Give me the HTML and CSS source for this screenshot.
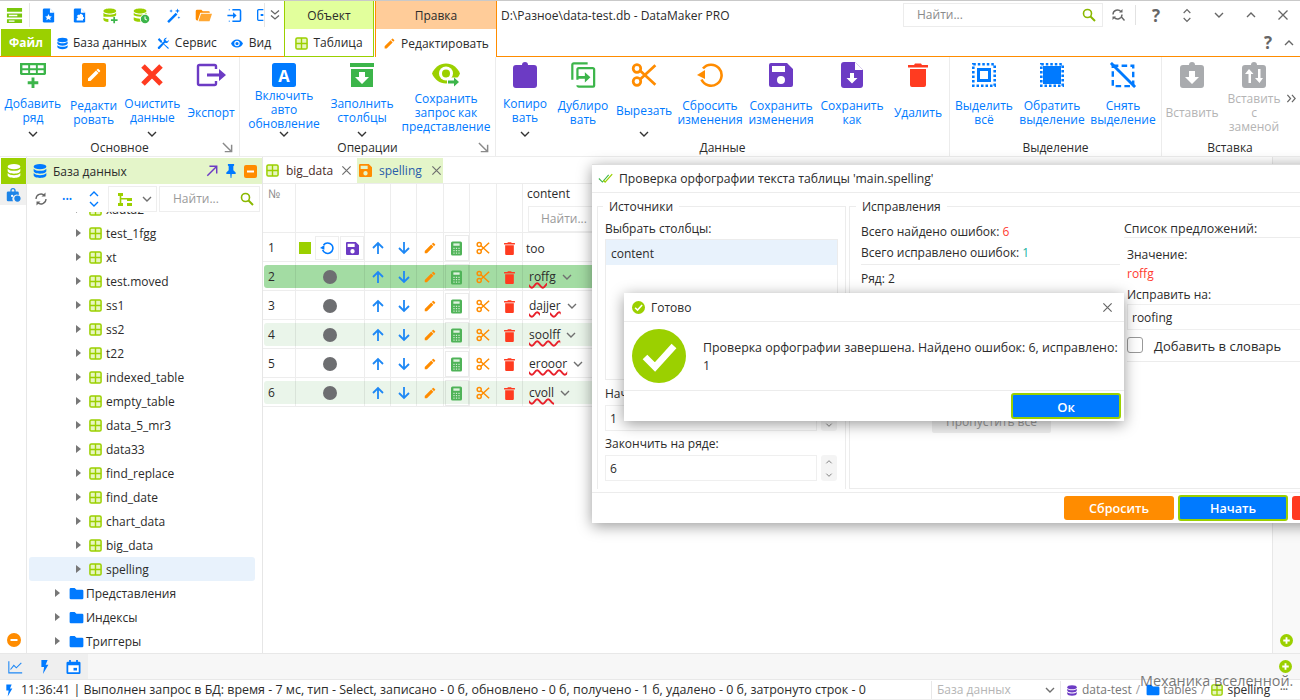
FILE: index.html
```html
<!DOCTYPE html>
<html lang="ru">
<head>
<meta charset="utf-8">
<title>DataMaker PRO</title>
<link rel="stylesheet" href="styles.css">
</head>
<body>
<svg class="sprite" xmlns="http://www.w3.org/2000/svg">
  <symbol id="logo" viewBox="0 0 18 18"><path fill="#7ac70c" d="M1 1h16v4H1zM1 7h16v4H1zM1 13h16v4H1z"/><path fill="#fff" d="M3 8.300h9v1.400H3zM3 14.300h6v1.400H3z"/></symbol>
  <symbol id="docstar" viewBox="0 0 24 24"><path fill="#007aff" d="M6 2h8l6 6v12a2 2 0 0 1-2 2H6a2 2 0 0 1-2-2V4a2 2 0 0 1 2-2z"/><path fill="#fff" d="M14 2l6 6h-6zM12 10l1.500 3 3.200.4-2.400 2.200.7 3.200-3-1.700-3 1.700.7-3.200-2.400-2.200 3.200-.4z"/></symbol>
  <symbol id="docpuzzle" viewBox="0 0 24 24"><path fill="#007aff" d="M6 2h8l6 6v12a2 2 0 0 1-2 2H6a2 2 0 0 1-2-2V4a2 2 0 0 1 2-2z"/><path fill="#fff" d="M14 2l6 6h-6zM10 11h2.500a1.500 1.500 0 1 1 3 0H17v3a1.500 1.500 0 1 1 0 3v2H8v-3a1.500 1.500 0 1 0 0-3z"/></symbol>
  <symbol id="dbplus" viewBox="0 0 24 24"><path fill="#9bd000" d="M11 2c5 0 9 1.300 9 3.500S16 9 11 9 2 7.700 2 5.500 6 2 11 2zM2 8c2 2 6 2.800 9 2.800S18 10 20 8v3.500c-1.500 1.600-4 2.200-6.500 2.400H2.200C2 13.600 2 13 2 12zM2 15c2 1.200 4.500 1.800 7 1.900V21c-4-.2-7-1.600-7-3.500z"/><path fill="#3cb54a" d="M16 14h2.400v3.400H22v2.400h-3.600V23H16v-3.200h-3.400v-2.400H16z"/></symbol>
  <symbol id="dbclock" viewBox="0 0 24 24"><path fill="#9bd000" d="M10 2c5 0 9 1.300 9 3.500S15 9 10 9 1 7.700 1 5.500 5 2 10 2zM1 8c2 2 6 2.800 9 2.800S17 10 19 8v2.200a7.400 7.400 0 0 0-8.500 3.400C7 13.500 3 12.800 1 11.600zM1 14.500c2 1.300 5.500 2 8.700 2 0 1.500.3 3 1 4.400H10c-5 0-9-1.400-9-3.400z"/><circle cx="17" cy="17" r="6" fill="#3cb54a"/><path fill="none" stroke="#fff" stroke-width="1.500" d="M17 13.500V17l2.500 1.500"/></symbol>
  <symbol id="wand" viewBox="0 0 24 24"><path fill="#007aff" d="M16.500 8l2.500 2.500L7 22.500 4.500 20z"/><path fill="#007aff" d="M19 2l1 2.500 2.500 1-2.500 1-1 2.500-1-2.500-2.500-1 2.500-1zM10 3l.7 1.800 1.800.7-1.800.7L10 8l-.7-1.800L7.500 5.500l1.800-.7zM21 13l.6 1.400 1.400.6-1.400.6-.6 1.400-.6-1.400-1.400-.6 1.400-.6z"/></symbol>
  <symbol id="openfolder" viewBox="0 0 24 24"><path fill="#ff8c00" d="M3 4h6l2 2h8a2 2 0 0 1 2 2H7.500L4 19H3a2 2 0 0 1-2-2V6a2 2 0 0 1 2-2z"/><path fill="#ffa733" d="M8.500 9.500H24l-3.500 10.500H5z"/></symbol>
  <symbol id="login" viewBox="0 0 24 24"><path fill="none" stroke="#007aff" stroke-width="2.200" d="M9 4h10a1.500 1.500 0 0 1 1.500 1.500v13A1.500 1.500 0 0 1 19 20H9M4 20h1M4 4h1"/><path fill="#007aff" d="M2 11h8V7.500l5 4.500-5 4.500V13H2z"/></symbol>
  <symbol id="boxclip" viewBox="0 0 10 24"><path fill="none" stroke="#007aff" stroke-width="2" d="M10 4H3a1.500 1.500 0 0 0-1.500 1.500v13A1.500 1.500 0 0 0 3 20h7"/><rect x="6" y="10.500" width="4" height="3" fill="#007aff"/></symbol>
  <symbol id="dchev" viewBox="0 0 12 12"><path fill="none" stroke="#666" stroke-width="1.300" d="M2 1.500l4 3.500 4-3.500M2 6.500l4 3.500 4-3.500"/></symbol>
  <symbol id="drchev" viewBox="0 0 12 12"><path fill="none" stroke="#666" stroke-width="1.300" d="M1.500 2L5 6l-3.500 4M6.500 2L10 6l-3.500 4"/></symbol>
  <symbol id="db" viewBox="0 0 24 24"><ellipse cx="12" cy="5.500" rx="9.500" ry="4" fill="currentColor"/><path fill="currentColor" d="M2.500 8.500c2 2.400 5.500 3.200 9.500 3.200s7.500-.8 9.500-3.200V12c0 2.200-4.300 4-9.500 4s-9.500-1.800-9.500-4zM2.500 15c2 2.400 5.500 3.200 9.500 3.200s7.500-.8 9.500-3.200v3.500c0 2.200-4.300 4-9.500 4s-9.500-1.800-9.500-4z"/></symbol>
  <symbol id="tools" viewBox="0 0 24 24"><path fill="#007aff" d="M4 2l5.500 5.500-.5 1.500L22 20.500 20.500 22 8.500 10l-1.500.5L1.500 5z"/><path fill="#007aff" d="M22 5.500a5.500 5.500 0 0 1-7.200 5.200L5 21.500a2 2 0 0 1-3-3l10.500-10A5.500 5.500 0 0 1 18.500 1.500L15 5l3.500 3.500z"/></symbol>
  <symbol id="eye" viewBox="0 0 24 24"><path fill="currentColor" d="M12 4.500C7 4.500 2.700 7.600 1 12c1.700 4.400 6 7.500 11 7.500s9.300-3.100 11-7.500c-1.700-4.400-6-7.500-11-7.500zM12 17a5 5 0 1 1 0-10 5 5 0 0 1 0 10zm0-8a3 3 0 1 0 0 6 3 3 0 0 0 0-6z"/></symbol>
  <symbol id="table" viewBox="0 0 14 14"><rect x="1" y="1" width="12" height="12" rx="1.500" fill="#e7f6bf" stroke="#9bd000" stroke-width="1.600"/><path stroke="#9bd000" stroke-width="1.500" d="M7 1v12M1 7h12"/></symbol>
  <symbol id="pencil" viewBox="0 0 24 24"><path fill="#ff8c00" d="M3 17.250V21h3.750L17.810 9.940l-3.750-3.750L3 17.250zM20.710 7.040a1 1 0 0 0 0-1.410l-2.340-2.340a1 1 0 0 0-1.410 0l-1.830 1.830 3.750 3.750 1.830-1.830z"/></symbol>
  <symbol id="search" viewBox="0 0 14 14"><circle cx="5.500" cy="5.500" r="4" fill="none" stroke="#8ab800" stroke-width="1.600"/><path stroke="#8ab800" stroke-width="2" d="M8.500 8.500l4.500 4.500"/></symbol>
  <symbol id="rsearch" viewBox="0 0 16 16"><path fill="none" stroke="#666" stroke-width="1.400" d="M3 7.500a4.500 4.500 0 0 1 8-2.800M12 7.500a4.500 4.500 0 0 1-8 2.800M11 9.500l3.500 4"/><path fill="#666" d="M9 5.500h3.500V2zM6 9.500H2.500V13z"/></symbol>
  <symbol id="updown" viewBox="0 0 12 18"><path fill="none" stroke="currentColor" stroke-width="1.400" d="M2 6l4-4 4 4M2 12l4 4 4-4"/></symbol>
  <symbol id="cdown" viewBox="0 0 12 12"><path fill="none" stroke="currentColor" stroke-width="1.400" d="M2 4l4 4 4-4"/></symbol>
  <symbol id="cup" viewBox="0 0 12 12"><path fill="none" stroke="currentColor" stroke-width="1.400" d="M2 8l4-4 4 4"/></symbol>
  <symbol id="x" viewBox="0 0 12 12"><path fill="none" stroke="currentColor" stroke-width="1.300" d="M1.500 1.500l9 9M10.500 1.500l-9 9"/></symbol>

  <symbol id="addrow" viewBox="0 0 27 27"><path fill="#3cb54a" d="M0 1h27v11a1.500 1.500 0 0 1-1.500 1.500h-24A1.500 1.500 0 0 1 0 12z"/><path fill="#fff" d="M2.500 3.500h6v3h-6zM10.500 3.500h6v3h-6zM18.500 3.500h6v3h-6zM2.500 8.500h6v3h-6zM10.500 8.500h6v3h-6zM18.500 8.500h6v3h-6z"/><path fill="#3cb54a" d="M12 16h3v4h4v3h-4v4h-3v-4H8v-3h4z"/></symbol>
  <symbol id="editbox" viewBox="0 0 24 24"><rect width="24" height="24" rx="2" fill="#ff8c00"/><path fill="#fff" d="M6 15.500V18h2.500l8-8-2.500-2.500zM18 8.500a.7.700 0 0 0 0-1L16.500 6a.7.700 0 0 0-1 0l-1 1 2.500 2.500z"/></symbol>
  <symbol id="redx" viewBox="0 0 24 24"><path fill="none" stroke="#ff3b20" stroke-width="5" d="M3 3l18 18M21 3L3 21"/></symbol>
  <symbol id="export" viewBox="0 0 30 24"><path fill="none" stroke="#6c3bc4" stroke-width="2.400" d="M20 6V3.500A1.500 1.500 0 0 0 18.500 2h-15A1.500 1.500 0 0 0 2 3.500v17A1.500 1.500 0 0 0 3.500 22h15a1.500 1.500 0 0 0 1.500-1.500V18"/><path fill="#6c3bc4" d="M11 10.500h12V6l7 6-7 6v-4.500H11z"/></symbol>
  <symbol id="autoa" viewBox="0 0 24 24"><rect width="24" height="24" rx="2.500" fill="#007aff"/><text x="12" y="18.500" text-anchor="middle" font-family="Liberation Mono, monospace" font-weight="700" font-size="19" fill="#fff">A</text></symbol>
  <symbol id="fill" viewBox="0 0 24 24"><path fill="#3cb54a" d="M0 0h24v4H0zM1 6h22v18H1z"/><path fill="#fff" d="M9 9h6v5h4l-7 7-7-7h4z"/></symbol>
  <symbol id="eyearrow" viewBox="0 0 28 23"><path fill="#9bd000" d="M14 0C7.500 0 2.500 4 0 10c2.500 6 7.500 10 14 10s11.500-4 14-10C25.500 4 20.500 0 14 0z"/><circle cx="14" cy="10" r="7" fill="#fff"/><circle cx="14" cy="10" r="4" fill="#9bd000"/><path fill="#fff" d="M15 14h13v9H15z"/><path fill="#3cb54a" d="M16 17h6v-3l5 4.500-5 4.500v-3h-6z"/></symbol>
  <symbol id="clip" viewBox="0 0 24 26"><path fill="#6c3bc4" d="M12 0a3 3 0 0 1 3 3h6a3 3 0 0 1 3 3v17a3 3 0 0 1-3 3H3a3 3 0 0 1-3-3V6a3 3 0 0 1 3-3h6a3 3 0 0 1 3-3z"/></symbol>
  <symbol id="dup" viewBox="0 0 26 28"><path fill="none" stroke="#3cb54a" stroke-width="2.400" d="M18 1.500H3A1.500 1.500 0 0 0 1.500 3v16M7 19v-11A1.500 1.500 0 0 1 8.500 6.500h15A1.500 1.500 0 0 1 25 8v17.500a1 1 0 0 1-1 1H8.500A1.500 1.500 0 0 1 7 25"/><path fill="#3cb54a" d="M7 15h8v-4l6 5.500L15 22v-4H7z"/></symbol>
  <symbol id="cut" viewBox="0 0 24 24"><g fill="none" stroke="#ff8c00" stroke-width="2.500"><circle cx="5.500" cy="6" r="3.500"/><circle cx="5.500" cy="18" r="3.500"/><path d="M8.500 8l14 13M8.500 16l14-13"/></g></symbol>
  <symbol id="reset" viewBox="0 0 26 26"><path fill="none" stroke="#ff8c00" stroke-width="2.600" d="M6 6.500a10.500 10.500 0 1 1-1.500 11"/><path fill="#ff8c00" d="M0 13l8-5v9z"/></symbol>
  <symbol id="save" viewBox="0 0 24 24"><path fill="#6c3bc4" d="M18 0H2a2 2 0 0 0-2 2v20a2 2 0 0 0 2 2h20a2 2 0 0 0 2-2V6zM12 21a4 4 0 1 1 0-8 4 4 0 0 1 0 8zM16 9H3V3h13z"/></symbol>
  <symbol id="saveo" viewBox="0 0 24 24"><path fill="#ff8c00" d="M18 0H2a2 2 0 0 0-2 2v20a2 2 0 0 0 2 2h20a2 2 0 0 0 2-2V6zM12 21a4 4 0 1 1 0-8 4 4 0 0 1 0 8zM16 9H3V3h13z"/></symbol>
  <symbol id="saveas" viewBox="0 0 22 26"><path fill="#6c3bc4" d="M3 0h11l8 8v15a3 3 0 0 1-3 3H3a3 3 0 0 1-3-3V3a3 3 0 0 1 3-3z"/><path fill="#fff" d="M14 0l8 8h-8zM9 11h4v5h3.500L11 21.500 5.500 16H9z"/></symbol>
  <symbol id="trash" viewBox="0 0 20 24"><path fill="#ff3b20" d="M2 6h16v16a2 2 0 0 1-2 2H4a2 2 0 0 1-2-2zM0 2h6l1-1.500h6L14 2h6v2.500H0z"/></symbol>
  <symbol id="selall" viewBox="0 0 24 24"><path fill="none" stroke="#007aff" stroke-width="2.600" stroke-dasharray="2.500 2" d="M1.300 1.300h21.400v21.400H1.300z"/><rect x="6.500" y="6.500" width="11" height="11" fill="#fff" stroke="#007aff" stroke-width="3"/></symbol>
  <symbol id="invert" viewBox="0 0 24 24"><path fill="none" stroke="#007aff" stroke-width="2.600" stroke-dasharray="2.500 2" d="M1.300 1.300h21.400v21.400H1.300z"/><rect x="3" y="3" width="18" height="18" fill="#007aff"/></symbol>
  <symbol id="desel" viewBox="0 0 28 28"><path fill="none" stroke="#007aff" stroke-width="2.600" stroke-dasharray="6 3.500" d="M3 4h22v22H3z"/><path stroke="#007aff" stroke-width="3" d="M1 1l26 26"/></symbol>
  <symbol id="pastedown" viewBox="0 0 24 26"><path fill="#a9abae" d="M12 0a3 3 0 0 1 3 3h6a3 3 0 0 1 3 3v17a3 3 0 0 1-3 3H3a3 3 0 0 1-3-3V6a3 3 0 0 1 3-3h6a3 3 0 0 1 3-3z"/><path fill="#fff" d="M9 9h6v6h4l-7 7-7-7h4z"/></symbol>
  <symbol id="pasteswap" viewBox="0 0 24 26"><path fill="#a9abae" d="M12 0a3 3 0 0 1 3 3h6a3 3 0 0 1 3 3v17a3 3 0 0 1-3 3H3a3 3 0 0 1-3-3V6a3 3 0 0 1 3-3h6a3 3 0 0 1 3-3z"/><path fill="#fff" d="M7 7l4.500 5H9v9H6.500v-9H3zM16 7h2.500v9H21l-3.500 5-4.500-5h3z" /></symbol>
  <symbol id="corner" viewBox="0 0 12 12"><path fill="none" stroke="#8a8a8a" stroke-width="1.600" d="M1 1l9 9M3 10.500h7.500V3"/></symbol>

  <symbol id="lock" viewBox="0 0 18 18"><path fill="#1d84e8" d="M6 4a3 3 0 0 1 6 0v1h2a1.500 1.500 0 0 1 1.500 1.500V9A5 5 0 0 0 9 16H3.500A1.500 1.500 0 0 1 2 14.500v-8A1.500 1.500 0 0 1 3.500 5H6zm1.500 1h3V4a1.500 1.500 0 0 0-3 0z"/><circle cx="14" cy="13" r="3.500" fill="#1d84e8"/><circle cx="8" cy="10" r="1.300" fill="#fff"/></symbol>
  <symbol id="refresh" viewBox="0 0 16 16"><path fill="none" stroke="#666" stroke-width="1.300" d="M3 8a5 5 0 0 1 8.500-3.500M13 8a5 5 0 0 1-8.500 3.500"/><path fill="#666" d="M12.500 1.500v4h-4zM3.500 14.500v-4h4z"/></symbol>
  <symbol id="treeic" viewBox="0 0 16 16"><path fill="#9bd000" d="M1 2h5v3H1zM1 12h5v3H1zM10 7h5v3h-5zM10 12h5v3h-5zM2.700 5h1.600v2H10v1.500H4.300V12H2.700z"/></symbol>
  <symbol id="arrowne" viewBox="0 0 14 14"><path fill="none" stroke="#6c3bc4" stroke-width="1.700" d="M1.500 12.500L12 2M4 1.500h8.500V10"/></symbol>
  <symbol id="pin" viewBox="0 0 14 18"><path fill="#007aff" d="M3 0h8v2l-1 1v5l3 3v2H8l-.5 5h-1L6 13H1v-2l3-3V3L3 2z"/></symbol>
  <symbol id="folder" viewBox="0 0 24 20"><path fill="#007aff" d="M9 1H3a2 2 0 0 0-2 2v14a2 2 0 0 0 2 2h18a2 2 0 0 0 2-2V6a2 2 0 0 0-2-2H12z"/></symbol>
  <symbol id="up" viewBox="0 0 14 14"><path fill="none" stroke="#1e88f5" stroke-width="1.800" d="M7 13V2M2 7l5-5 5 5"/></symbol>
  <symbol id="down" viewBox="0 0 14 14"><path fill="none" stroke="#1e88f5" stroke-width="1.800" d="M7 1v11M2 7l5 5 5-5"/></symbol>
  <symbol id="calc" viewBox="0 0 14 18"><rect width="14" height="18" rx="2" fill="#4fb358"/><path fill="#dff2df" d="M3 2.500h8v3H3z"/><path fill="#cfeccf" d="M3 8h1.600v1.600H3zM6.200 8h1.600v1.600H6.200zM9.400 8H11v1.600H9.400zM3 11h1.600v1.600H3zM6.200 11h1.600v1.600H6.200zM9.400 11H11v1.600H9.400zM3 14h1.600v1.600H3zM6.200 14h1.600v1.600H6.200zM9.400 14H11v1.600H9.400z"/></symbol>
  <symbol id="blueundo" viewBox="0 0 16 16"><path fill="none" stroke="#007aff" stroke-width="1.800" d="M4 4.500a6 6 0 1 1-1 5.500"/><path fill="#007aff" d="M0 8l5-3.500V10z"/></symbol>
  <symbol id="dblcheck" viewBox="0 0 18 12"><path fill="none" stroke="#3cb54a" stroke-width="1.200" d="M1 6l4 4 7-8"/><path fill="none" stroke="#9bd000" stroke-width="1.400" d="M6 8l2 2 8-9"/></symbol>
  <symbol id="chart" viewBox="0 0 18 16"><path fill="none" stroke="#1e88f5" stroke-width="1.300" d="M1 1v14h16M3 11l4-5 3 3 6-6"/></symbol>
  <symbol id="bolt" viewBox="0 0 12 18"><path fill="#007aff" d="M2 0h8L7.500 6H11L4 18l1.500-9H2z"/></symbol>
  <symbol id="cal" viewBox="0 0 16 16"><path fill="#007aff" d="M3 0h2v2h6V0h2v2h1.500A1.500 1.500 0 0 1 16 3.500v11a1.500 1.500 0 0 1-1.500 1.500h-13A1.500 1.500 0 0 1 0 14.500v-11A1.500 1.500 0 0 1 1.500 2H3z"/><path fill="#fff" d="M2 6h12v8H2z"/><path fill="#007aff" d="M8 9h4v3H8z"/></symbol>
  <symbol id="minuscircle" viewBox="0 0 14 14"><circle cx="7" cy="7" r="7" fill="#ff8c00"/><path fill="#fff" d="M3.500 6h7v2h-7z"/></symbol>
  <symbol id="pluscircle" viewBox="0 0 14 14"><circle cx="7" cy="7" r="7" fill="#9bd000"/><path fill="#fff" d="M6 3.500h2V6h2.500v2H8v2.500H6V8H3.500V6H6z"/></symbol>
  <symbol id="minusbox" viewBox="0 0 13 13"><rect width="13" height="13" rx="2" fill="#ff8c00"/><path fill="#fff" d="M3 5.500h7v2H3z"/></symbol>
  <symbol id="okcircle" viewBox="0 0 54 54"><circle cx="27" cy="27" r="27" fill="#9bd000"/><path fill="none" stroke="#fff" stroke-width="6.500" d="M13 28l10 10 19-21"/></symbol>
</svg>

<div class="app">
  <header class="top">
    <div class="top-left">
      <div class="qat">
        <svg class="qi logo"><use href="#logo"/></svg>
        <span class="qsep"></span>
        <svg class="qi q1"><use href="#docstar"/></svg>
        <svg class="qi"><use href="#docpuzzle"/></svg>
        <svg class="qi"><use href="#dbplus"/></svg>
        <svg class="qi"><use href="#dbclock"/></svg>
        <svg class="qi"><use href="#wand"/></svg>
        <svg class="qi"><use href="#openfolder"/></svg>
        <svg class="qi"><use href="#login"/></svg>
        <svg class="qclip"><use href="#boxclip"/></svg>
        <span class="qsep2"></span>
        <svg class="qmore"><use href="#dchev"/></svg>
      </div>
      <nav class="menu">
        <span class="menu-file">Файл</span>
        <span class="menu-item m-db"><svg class="mi blue"><use href="#db"/></svg>База данных</span>
        <span class="menu-item m-srv"><svg class="mi"><use href="#tools"/></svg>Сервис</span>
        <span class="menu-item"><svg class="mi m-eye blue"><use href="#eye"/></svg>Вид</span>
      </nav>
    </div>
    <div class="ctx ctx-object">
      <div class="ctx-head">Объект</div>
      <div class="ctx-tab"><svg class="mi"><use href="#table"/></svg>Таблица</div>
    </div>
    <div class="ctx ctx-edit">
      <div class="ctx-head">Правка</div>
      <div class="ctx-tab"><svg class="mi"><use href="#pencil"/></svg>Редактировать</div>
    </div>
    <div class="title-area">
      <div class="title-row">
        <span class="title-text">D:\Разное\data-test.db - DataMaker PRO</span>
        <div class="top-search"><span>Найти...</span><svg class="s14"><use href="#search"/></svg></div>
        <svg class="s16 tool-r"><use href="#rsearch"/></svg>
        <span class="vsep"></span>
        <span class="help">?</span>
        <svg class="win win-tall gray"><use href="#updown"/></svg>
        <svg class="win gray"><use href="#cdown"/></svg>
        <svg class="win gray"><use href="#cup"/></svg>
        <svg class="win gray"><use href="#x"/></svg>
      </div>
      <div class="title-row2">
        <span class="help">?</span>
        <svg class="s12 gray"><use href="#cup"/></svg>
      </div>
    </div>
  </header>

  <section class="ribbon">
    <div class="rgroup g1">
      <div class="rbtns">
        <div class="rb w66"><div class="rb-ic"><svg class="i26"><use href="#addrow"/></svg></div><div class="rb-lbl">Добавить<br>ряд</div><svg class="rb-chev"><use href="#cdown"/></svg></div>
        <div class="rb w56"><div class="rb-ic"><svg class="i24"><use href="#editbox"/></svg></div><div class="rb-lbl">Редакти<br>ровать</div></div>
        <div class="rb w62"><div class="rb-ic"><svg class="i24"><use href="#redx"/></svg></div><div class="rb-lbl">Очистить<br>данные</div><svg class="rb-chev"><use href="#cdown"/></svg></div>
        <div class="rb w56"><div class="rb-ic"><svg class="i30"><use href="#export"/></svg></div><div class="rb-lbl">Экспорт</div></div>
      </div>
      <div class="rcap">Основное<svg class="corner"><use href="#corner"/></svg></div>
    </div>
    <div class="rgroup g2">
      <div class="rbtns pad4">
        <div class="rb w80"><div class="rb-ic"><svg class="i24"><use href="#autoa"/></svg></div><div class="rb-lbl three">Включить<br>авто<br>обновление</div><svg class="rb-chev"><use href="#cdown"/></svg></div>
        <div class="rb w76"><div class="rb-ic"><svg class="i24"><use href="#fill"/></svg></div><div class="rb-lbl">Заполнить<br>столбцы</div><svg class="rb-chev"><use href="#cdown"/></svg></div>
        <div class="rb w92"><div class="rb-ic"><svg class="i28"><use href="#eyearrow"/></svg></div><div class="rb-lbl">Сохранить<br>запрос как<br>представление</div></div>
      </div>
      <div class="rcap">Операции<svg class="corner"><use href="#corner"/></svg></div>
    </div>
    <div class="rgroup g3">
      <div class="rbtns pad2">
        <div class="rb w54"><div class="rb-ic"><svg class="i26"><use href="#clip"/></svg></div><div class="rb-lbl">Копиро<br>вать</div><svg class="rb-chev"><use href="#cdown"/></svg></div>
        <div class="rb w62"><div class="rb-ic"><svg class="i26"><use href="#dup"/></svg></div><div class="rb-lbl">Дублиро<br>вать</div></div>
        <div class="rb w60"><div class="rb-ic"><svg class="i26"><use href="#cut"/></svg></div><div class="rb-lbl">Вырезать</div><svg class="rb-chev"><use href="#cdown"/></svg></div>
        <div class="rb w72"><div class="rb-ic"><svg class="i26"><use href="#reset"/></svg></div><div class="rb-lbl">Сбросить<br>изменения</div></div>
        <div class="rb w70"><div class="rb-ic"><svg class="i24"><use href="#save"/></svg></div><div class="rb-lbl">Сохранить<br>изменения</div></div>
        <div class="rb w72"><div class="rb-ic"><svg class="i26"><use href="#saveas"/></svg></div><div class="rb-lbl">Сохранить<br>как</div></div>
        <div class="rb w60"><div class="rb-ic"><svg class="i24"><use href="#trash"/></svg></div><div class="rb-lbl">Удалить</div></div>
      </div>
      <div class="rcap">Данные</div>
    </div>
    <div class="rgroup g4">
      <div class="rbtns">
        <div class="rb w68"><div class="rb-ic"><svg class="i24"><use href="#selall"/></svg></div><div class="rb-lbl">Выделить<br>всё</div></div>
        <div class="rb w68"><div class="rb-ic"><svg class="i24"><use href="#invert"/></svg></div><div class="rb-lbl">Обратить<br>выделение</div></div>
        <div class="rb w74"><div class="rb-ic"><svg class="i28"><use href="#desel"/></svg></div><div class="rb-lbl">Снять<br>выделение</div></div>
      </div>
      <div class="rcap">Выделение</div>
    </div>
    <div class="rgroup g5">
      <div class="rbtns">
        <div class="rb w60 off"><div class="rb-ic"><svg class="i26"><use href="#pastedown"/></svg></div><div class="rb-lbl">Вставить</div></div>
        <div class="rb w64 off"><div class="rb-ic"><svg class="i26"><use href="#pasteswap"/></svg></div><div class="rb-lbl">Вставить<br>с<br>заменой</div></div>
        <svg class="rmore"><use href="#drchev"/></svg>
      </div>
      <div class="rcap short">Вставка</div>
    </div>
  </section>

  <main class="main">
    <aside class="rail">
      <div class="rail-active"><svg class="i16 white"><use href="#db"/></svg></div>
      <div class="rail-item"><svg class="i16"><use href="#lock"/></svg></div>
      <svg class="rail-min"><use href="#minuscircle"/></svg>
    </aside>
    <aside class="side">
      <div class="side-head">
        <svg class="i16 blue"><use href="#db"/></svg>
        <span class="side-title">База данных</span>
        <svg class="s12 arrow"><use href="#arrowne"/></svg>
        <svg class="s14 pin"><use href="#pin"/></svg>
        <svg class="s13"><use href="#minusbox"/></svg>
      </div>
      <div class="side-tools">
        <svg class="s16 t1"><use href="#refresh"/></svg>
        <span class="dots">•••</span>
        <svg class="ud blue"><use href="#updown"/></svg>
        <div class="tbox tbox-tree"><svg class="s16"><use href="#treeic"/></svg><svg class="s12 gray2"><use href="#cdown"/></svg></div>
        <div class="tbox tbox-find"><span>Найти...</span><svg class="s14"><use href="#search"/></svg></div>
      </div>
      <div class="tree">
        <div class="tree-clip">
          <div class="tr"><i class="ar"></i><svg class="ti"><use href="#table"/></svg>xadta2</div>
          <div class="tr"><i class="ar"></i><svg class="ti"><use href="#table"/></svg>test_1fgg</div>
          <div class="tr"><i class="ar"></i><svg class="ti"><use href="#table"/></svg>xt</div>
          <div class="tr"><i class="ar"></i><svg class="ti"><use href="#table"/></svg>test.moved</div>
          <div class="tr"><i class="ar"></i><svg class="ti"><use href="#table"/></svg>ss1</div>
          <div class="tr"><i class="ar"></i><svg class="ti"><use href="#table"/></svg>ss2</div>
          <div class="tr"><i class="ar"></i><svg class="ti"><use href="#table"/></svg>t22</div>
          <div class="tr"><i class="ar"></i><svg class="ti"><use href="#table"/></svg>indexed_table</div>
          <div class="tr"><i class="ar"></i><svg class="ti"><use href="#table"/></svg>empty_table</div>
          <div class="tr"><i class="ar"></i><svg class="ti"><use href="#table"/></svg>data_5_mr3</div>
          <div class="tr"><i class="ar"></i><svg class="ti"><use href="#table"/></svg>data33</div>
          <div class="tr"><i class="ar"></i><svg class="ti"><use href="#table"/></svg>find_replace</div>
          <div class="tr"><i class="ar"></i><svg class="ti"><use href="#table"/></svg>find_date</div>
          <div class="tr"><i class="ar"></i><svg class="ti"><use href="#table"/></svg>chart_data</div>
          <div class="tr"><i class="ar"></i><svg class="ti"><use href="#table"/></svg>big_data</div>
          <div class="tr sel"><i class="ar"></i><svg class="ti"><use href="#table"/></svg>spelling</div>
          <div class="tr lvl"><i class="ar"></i><svg class="fi"><use href="#folder"/></svg>Представления</div>
          <div class="tr lvl"><i class="ar"></i><svg class="fi"><use href="#folder"/></svg>Индексы</div>
          <div class="tr lvl"><i class="ar"></i><svg class="fi"><use href="#folder"/></svg>Триггеры</div>
        </div>
      </div>
    </aside>
    <section class="work">
      <div class="tabs">
        <div class="tab tab-a"><svg class="s13"><use href="#table"/></svg><span class="tab-name dark">big_data</span><svg class="s11 gray2"><use href="#x"/></svg></div>
        <div class="tab tab-b"><svg class="s13"><use href="#saveo"/></svg><span class="tab-name bluish">spelling</span><svg class="s11 gray2"><use href="#x"/></svg></div>
      </div>
      <div class="grid">
        <div class="row head">
          <div class="c gray-t">№</div><div class="c"></div><div class="c"></div><div class="c"></div><div class="c"></div><div class="c"></div><div class="c"></div><div class="c"></div>
          <div class="c last"><div>content</div><div class="find"><span>Найти...</span></div></div>
        </div>
        <div class="row">
          <div class="c num">1</div>
          <div class="c tools1"><span class="sq"></span><span class="mini"><svg class="s14"><use href="#blueundo"/></svg></span><span class="mini"><svg class="s13"><use href="#save"/></svg></span></div>
          <div class="c ic"><svg class="s14"><use href="#up"/></svg></div><div class="c ic"><svg class="s14"><use href="#down"/></svg></div><div class="c ic"><svg class="s14"><use href="#pencil"/></svg></div>
          <div class="c ic"><span class="calc"><svg class="calc-i"><use href="#calc"/></svg></span></div><div class="c ic"><svg class="s14"><use href="#cut"/></svg></div><div class="c ic"><svg class="tr-i"><use href="#trash"/></svg></div>
          <div class="c last plain">too</div>
        </div>
        <div class="row hl-strong">
          <div class="c num">2</div><div class="c ic"><i class="dot"></i></div>
          <div class="c ic"><svg class="s14"><use href="#up"/></svg></div><div class="c ic"><svg class="s14"><use href="#down"/></svg></div><div class="c ic"><svg class="s14"><use href="#pencil"/></svg></div>
          <div class="c ic"><span class="calc"><svg class="calc-i"><use href="#calc"/></svg></span></div><div class="c ic"><svg class="s14"><use href="#cut"/></svg></div><div class="c ic"><svg class="tr-i"><use href="#trash"/></svg></div>
          <div class="c last err"><span class="wavy">roffg</span><svg class="s12 gray2"><use href="#cdown"/></svg></div>
        </div>
        <div class="row">
          <div class="c num">3</div><div class="c ic"><i class="dot"></i></div>
          <div class="c ic"><svg class="s14"><use href="#up"/></svg></div><div class="c ic"><svg class="s14"><use href="#down"/></svg></div><div class="c ic"><svg class="s14"><use href="#pencil"/></svg></div>
          <div class="c ic"><span class="calc"><svg class="calc-i"><use href="#calc"/></svg></span></div><div class="c ic"><svg class="s14"><use href="#cut"/></svg></div><div class="c ic"><svg class="tr-i"><use href="#trash"/></svg></div>
          <div class="c last err"><span class="wavy">dajjer</span><svg class="s12 gray2"><use href="#cdown"/></svg></div>
        </div>
        <div class="row hl">
          <div class="c num">4</div><div class="c ic"><i class="dot"></i></div>
          <div class="c ic"><svg class="s14"><use href="#up"/></svg></div><div class="c ic"><svg class="s14"><use href="#down"/></svg></div><div class="c ic"><svg class="s14"><use href="#pencil"/></svg></div>
          <div class="c ic"><span class="calc"><svg class="calc-i"><use href="#calc"/></svg></span></div><div class="c ic"><svg class="s14"><use href="#cut"/></svg></div><div class="c ic"><svg class="tr-i"><use href="#trash"/></svg></div>
          <div class="c last err"><span class="wavy">soolff</span><svg class="s12 gray2"><use href="#cdown"/></svg></div>
        </div>
        <div class="row">
          <div class="c num">5</div><div class="c ic"><i class="dot"></i></div>
          <div class="c ic"><svg class="s14"><use href="#up"/></svg></div><div class="c ic"><svg class="s14"><use href="#down"/></svg></div><div class="c ic"><svg class="s14"><use href="#pencil"/></svg></div>
          <div class="c ic"><span class="calc"><svg class="calc-i"><use href="#calc"/></svg></span></div><div class="c ic"><svg class="s14"><use href="#cut"/></svg></div><div class="c ic"><svg class="tr-i"><use href="#trash"/></svg></div>
          <div class="c last err"><span class="wavy">erooor</span><svg class="s12 gray2"><use href="#cdown"/></svg></div>
        </div>
        <div class="row hl">
          <div class="c num">6</div><div class="c ic"><i class="dot"></i></div>
          <div class="c ic"><svg class="s14"><use href="#up"/></svg></div><div class="c ic"><svg class="s14"><use href="#down"/></svg></div><div class="c ic"><svg class="s14"><use href="#pencil"/></svg></div>
          <div class="c ic"><span class="calc"><svg class="calc-i"><use href="#calc"/></svg></span></div><div class="c ic"><svg class="s14"><use href="#cut"/></svg></div><div class="c ic"><svg class="tr-i"><use href="#trash"/></svg></div>
          <div class="c last err"><span class="wavy">cvoll</span><svg class="s12 gray2"><use href="#cdown"/></svg></div>
        </div>
      </div>
    </section>
    <aside class="rail-r"><svg class="rail-plus"><use href="#pluscircle"/></svg></aside>
  </main>

  <div class="strip">
    <div class="strip-tabs">
      <svg class="sti"><use href="#chart"/></svg>
      <svg class="sti"><use href="#bolt"/></svg>
      <svg class="sti"><use href="#cal"/></svg>
    </div>
    <svg class="rail-plus"><use href="#pluscircle"/></svg>
  </div>

  <footer class="status">
    <svg class="st-bolt"><use href="#bolt"/></svg>
    <span class="st-msg">11:36:41 | Выполнен запрос в БД: время - 7 мс, тип - Select, записано - 0 б, обновлено - 0 б, получено - 1 б, удалено - 0 б, затронуто строк - 0</span>
    <div class="st-db"><span>База данных</span><svg class="s12 gray2"><use href="#cdown"/></svg></div>
    <div class="crumbs">
      <svg class="cr-db"><use href="#db"/></svg><span class="cr-g">data-test</span><span class="cr-s">/</span>
      <svg class="cr-f"><use href="#folder"/></svg><span class="cr-g">tables</span><span class="cr-s">/</span>
      <svg class="cr-t"><use href="#table"/></svg><span>spelling</span>
    </div>
    <span class="st-dots">•••</span>
  </footer>
</div>

<div class="dialog d-spell">
  <div class="d-title"><svg class="dbl"><use href="#dblcheck"/></svg>Проверка орфографии текста таблицы 'main.spelling'</div>
  <div class="d-body">
    <fieldset class="fs fs-src">
      <legend>Источники</legend>
      <div class="lb l1">Выбрать столбцы:</div>
      <div class="list"><div class="list-sel">content</div></div>
      <div class="lb l2">Начать с ряда:</div>
      <div class="spin-row"><div class="inp">1</div><div class="spin"><svg class="s8"><use href="#cup"/></svg><svg class="s8"><use href="#cdown"/></svg></div></div>
      <div class="lb l3">Закончить на ряде:</div>
      <div class="spin-row"><div class="inp">6</div><div class="spin"><svg class="s8"><use href="#cup"/></svg><svg class="s8"><use href="#cdown"/></svg></div></div>
    </fieldset>
    <fieldset class="fs fs-fix">
      <legend>Исправления</legend>
      <div class="fix">
        <div class="fix-l">
          <div class="fl1">Всего найдено ошибок: <b class="red">6</b></div>
          <div class="fl2">Всего исправлено ошибок: <b class="teal">1</b></div>
          <div class="fhr"></div>
          <div class="fl3">Ряд: 2</div>
          <div class="skip">Пропустить все</div>
        </div>
        <div class="fix-r">
          <div class="sg-head">Список предложений:</div>
          <div class="sg-in">
            <div class="sg1">Значение:</div>
            <div class="sg2 red">roffg</div>
            <div class="sg3">Исправить на:</div>
            <div class="sg-inp">roofing</div>
            <label class="sg-ch"><i class="check"></i><span>Добавить в словарь</span></label>
            <div class="sg-hr"></div>
          </div>
        </div>
      </div>
    </fieldset>
  </div>
  <div class="d-foot">
    <button class="btn b-orange">Сбросить</button>
    <button class="btn b-blue">Начать</button>
    <button class="btn b-red">Закрыть</button>
  </div>
</div>

<div class="dialog d-done">
  <div class="dn-title"><svg class="s13"><use href="#okcircle"/></svg><span>Готово</span><svg class="s11 dn-x"><use href="#x"/></svg></div>
  <div class="dn-body"><svg class="dn-ic"><use href="#okcircle"/></svg><p>Проверка орфографии завершена. Найдено ошибок: 6, исправлено:<br>1</p></div>
  <div class="dn-foot"><button class="btn b-blue ok">Ок</button></div>
</div>

<div class="watermark">Механика вселенной.</div>
</body>
</html>
```

FILE: styles.css
```css
* { box-sizing: border-box; }
html, body { margin: 0; height: 100%; }
body {
  width: 1300px; height: 700px; overflow: hidden; position: relative;
  font: 12px/14px "Open Sans", "Noto Sans", sans-serif; color: #2b2b2b; background: #fff;
}
.sprite { position: absolute; width: 0; height: 0; }
svg { display: block; flex: none; }
.blue { color: #007aff; }
.white { color: #fff; }
.gray { color: #666; }
.gray2 { color: #6f6f6f; }
.red { color: #ff3b30; font-weight: 400; }
.teal { color: #20b2a0; font-weight: 400; }

.app { display: flex; flex-direction: column; height: 700px; }

/* header */
.top { display: flex; height: 57px; border-top: 1px solid #c9c9c9; flex: none; }
.top-left { width: 284px; display: flex; flex-direction: column; }
.qat { height: 28px; display: flex; align-items: center; padding-left: 6px; }
.qi { width: 17px; height: 17px; margin-right: 14px; }
.qi.logo { width: 17px; height: 17px; margin-right: 6px; }
.qsep { width: 1px; height: 24px; background: #e6e6e6; margin-right: 10px; }
.qclip { width: 8px; height: 16px; margin-left: -1px; }
.qsep2 { width: 1px; height: 24px; background: #e6e6e6; margin-right: 4px; }
.qmore { width: 12px; height: 12px; }
.menu { height: 28px; display: flex; align-items: center; border-bottom: 1px solid #ff8c00; padding-left: 1px; white-space: nowrap; }
.menu-file { width: 50px; height: 27px; background: #9bd000; color: #fff; font-weight: 700; display: flex; align-items: center; justify-content: center; padding-top: 1px; }
.menu-item { display: flex; align-items: center; gap: 5px; padding-top: 1px; }
.m-db { margin-left: 5px; margin-right: 10px; gap: 4px; }
.m-srv { margin-right: 13px; }
.mi { width: 13px; height: 13px; }
.m-eye { width: 14px; }
.ctx { display: flex; flex-direction: column; text-align: center; }
.ctx-head { height: 28px; display: flex; align-items: center; justify-content: center; padding-top: 1px; }
.ctx-tab { height: 28px; display: flex; align-items: center; justify-content: center; gap: 5px; padding-top: 1px; }
.ctx-object { width: 90px; border: 1px solid #9bd000; border-width: 0 1px; margin-right: 1px; }
.ctx-object .ctx-head { background: #e2ff9c; }
.ctx-object .ctx-tab { border-bottom: 1px solid #9bd000; }
.ctx-edit { width: 122px; border: 1px solid #ff8c00; border-width: 0 1px; }
.ctx-edit .ctx-head { background: #ffcc99; }
.title-area { flex: 1; display: flex; flex-direction: column; border-bottom: 1px solid #ff8c00; }
.title-row { height: 28px; display: flex; align-items: center; padding-left: 4px; }
.title-text { width: 402px; padding-top: 1px; }
.top-search { width: 200px; height: 24px; border: 1px solid #ececec; display: flex; align-items: center; justify-content: space-between; padding: 0 6px 0 13px; color: #8a8a8a; }
.tool-r { margin-left: 7px; }
.vsep { width: 1px; height: 20px; background: #e2e2e2; margin: 0 11px 0 9px; }
.help { font: 700 17px/17px "Open Sans", sans-serif; color: #666; width: 14px; text-align: center; }
.title-row .help { margin-left: 2px; }
.win { width: 12px; height: 12px; margin-left: 20px; }
.win-tall { width: 10px; height: 15px; margin-left: 19px; margin-right: 1px; }
.title-row2 { flex: 1; display: flex; align-items: center; justify-content: flex-end; padding-right: 5px; gap: 8px; }
.s8 { width: 8px; height: 8px; color: #777; }
.s11 { width: 11px; height: 11px; }
.s12 { width: 12px; height: 12px; }
.s13 { width: 13px; height: 13px; }
.s14 { width: 14px; height: 14px; }
.s16 { width: 16px; height: 16px; }
.i16 { width: 16px; height: 16px; }
.i24 { width: 24px; height: 24px; }
.i26 { width: 26px; height: 26px; }
.i28 { width: 28px; height: 26px; }
.i30 { width: 30px; height: 24px; }

/* ribbon */
.ribbon { display: flex; height: 100px; flex: none; border-bottom: 1px solid #ededed; }
.rgroup { display: flex; flex-direction: column; border-right: 1px solid #ececec; }
.g1 { width: 240px; } .g2 { width: 256px; } .g3 { width: 454px; } .g4 { width: 212px; } .g5 { flex: 1; border-right: 0; }
.rbtns { display: flex; height: 83px; }
.pad4 { padding-left: 4px; } .pad2 { padding-left: 2px; }
.rb { display: flex; flex-direction: column; align-items: center; padding-top: 3px; text-align: center; color: #007aff; }
.rb.off { color: #b4b4b4; }
.w54 { width: 54px; } .w56 { width: 56px; } .w60 { width: 60px; } .w62 { width: 62px; } .w64 { width: 64px; } .w66 { width: 66px; }
.w68 { width: 68px; } .w70 { width: 70px; } .w72 { width: 72px; } .w74 { width: 74px; } .w76 { width: 76px; } .w80 { width: 80px; } .w92 { width: 92px; }
.rb-ic { height: 30px; display: flex; align-items: center; justify-content: center; }
.rb-lbl { height: 38px; margin-top: 2px; display: flex; align-items: center; justify-content: center; white-space: nowrap; }
.rb-lbl:last-child { margin-top: 4px; }
.rb-lbl.three { margin-top: 1px; }
.rb-chev { width: 12px; height: 12px; color: #333; margin-top: -2px; }
.rb-lbl.three + .rb-chev { margin-top: -1px; }
.rmore { width: 11px; height: 11px; margin-top: 36px; }
.rcap { height: 16px; line-height: 14px; padding-top: 1px; text-align: center; position: relative; }
.rcap.short { width: 136px; }
.corner { position: absolute; right: 6px; top: 2px; width: 11px; height: 11px; }

/* main */
.main { flex: 1; display: flex; min-height: 0; }
.rail { width: 27px; border-right: 1px solid #e8e8e8; display: flex; flex-direction: column; align-items: stretch; }
.rail-active { height: 26px; margin-top: 1px; margin-left: 1px; background: #9bd000; display: flex; align-items: center; justify-content: center; }
.rail-item { height: 21px; background: #f0f0f0; display: flex; align-items: center; justify-content: center; }
.rail-min { width: 14px; height: 14px; margin: auto 0 6px 7px; }
.side { width: 236px; border-right: 1px solid #e6e6e6; display: flex; flex-direction: column; min-height: 0; }
.side-head { height: 26px; margin-top: 1px; background: #e4f5c9; display: flex; align-items: center; padding-left: 5px; }
.side-title { margin-left: 5px; width: 153px; padding-top: 2px; }
.arrow { margin-right: 6px; }
.pin { margin-right: 6px; }
.side-tools { height: 28px; display: flex; align-items: center; padding: 1px 0 0 6px; }
.dots { color: #007aff; font-size: 9px; width: 16px; margin-left: 13px; }
.ud { width: 12px; height: 18px; margin-left: 10px; margin-right: 8px; }
.tbox { height: 26px; border: 1px solid #eee; display: flex; align-items: center; }
.tbox-tree { width: 49px; padding-left: 8px; gap: 8px; }
.tbox-find { width: 101px; margin-left: 2px; padding: 0 5px 0 13px; justify-content: space-between; color: #9a9a9a; }
.tree { flex: 1; overflow: hidden; min-height: 0; }
.tree-clip { margin-top: -15px; }
.tr { height: 24px; display: flex; align-items: center; padding: 2px 0 0 47px; margin: 0 7px 0 2px; }
.tr.sel { background: #e8f2fc; border-radius: 3px; }
.ar { width: 0; height: 0; border: 4px solid transparent; border-left: 5px solid #777; border-right: 0; margin: 0 8px 2px 0; }
.ti { width: 13px; height: 13px; margin: 0 4px 2px 0; }
.tr.lvl { padding-left: 26px; }
.tr.lvl .ar { margin-right: 9px; }
.fi { width: 15px; height: 13px; margin: 0 2px 2px 0; }

.work { flex: 1; min-width: 0; display: flex; flex-direction: column; }
.tabs { height: 27px; display: flex; border-bottom: 1px solid #ececec; padding-top: 1px; }
.tab { display: flex; align-items: center; }
.tab-a { width: 94px; padding-left: 3px; }
.tab-b { width: 86px; background: #e4f5c9; padding-left: 2px; }
.tab-name { margin: 0 6px 0 7px; width: 49px; padding-top: 1px; }
.tab-b .tab-name { width: 46px; }
.dark { color: #4a2c2a; }
.bluish { color: #2a5caa; }
.grid { display: flex; flex-direction: column; width: 100%; }
.row { display: grid; grid-template-columns: 33px 69px 26px 26px 27px 26px 27px 26px 1fr; height: 29px; border-bottom: 1px solid #ededed; position: relative; isolation: isolate; }
.row.head { height: 49px; }
.row.hl::before, .row.hl-strong::before { content: ""; position: absolute; left: 1px; right: 0; top: 3px; bottom: 2px; border-radius: 3px; z-index: -1; }
.row.hl::before { background: #eaf5ea; }
.row.hl-strong::before { background: #a3dca3; }
.c { border-right: 1px solid rgba(0, 0, 0, .07); display: flex; align-items: center; padding-top: 2px; }
.head .c { align-items: flex-start; padding-top: 3px; }
.gray-t { color: #8a8a8a; padding-left: 5px; }
.num { padding-left: 5px; }
.ic { justify-content: center; }
.dot { width: 14px; height: 14px; border-radius: 50%; background: #6d6e71; }
.calc { width: 24px; height: 26px; border: 1px solid rgba(0, 0, 0, .08); display: flex; align-items: center; justify-content: center; }
.calc-i { width: 11px; height: 15px; }
.tr-i { width: 11px; height: 13px; }
.tools1 { gap: 1px; padding-left: 3px; }
.sq { width: 12px; height: 12px; background: #9bd000; margin-right: 3px; }
.mini { width: 24px; height: 24px; border: 1px solid #eee; display: flex; align-items: center; justify-content: center; }
.last { border-right: 0; }
.plain { padding-left: 3px; padding-top: 3px; }
.err { padding-left: 6px; gap: 5px; }
.wavy { text-decoration: underline wavy #e8202a 1.500px; text-underline-offset: 1px; }
.head .last { flex-direction: column; padding-left: 4px; align-items: stretch; }
.find { height: 26px; margin-top: 5px; margin-left: 1px; border: 1px solid #eee; padding: 5px 0 0 12px; color: #9a9a9a; }
.rail-r { width: 28px; border-left: 1px solid #e8e8e8; background: #f9f9f9; display: flex; flex-direction: column; align-items: center; justify-content: flex-end; padding-bottom: 6px; }
.rail-plus { width: 13px; height: 13px; }

/* bottom */
.strip { height: 27px; flex: none; border-top: 1px solid #e8e8e8; border-bottom: 1px solid #e8e8e8; background: #f7f7f7; display: flex; align-items: center; justify-content: space-between; padding-right: 8px; }
.strip-tabs { width: 88px; height: 100%; background: #efefef; display: flex; align-items: center; gap: 14px; padding-left: 8px; }
.sti { width: 15px; height: 14px; }
.status { height: 20px; flex: none; display: flex; align-items: center; border-bottom: 1px solid #eee; font-size: 12.45px; padding-top: 1px; }
.st-bolt { width: 8px; height: 13px; margin-left: 5px; margin-right: 8px; }
.st-msg { width: 910px; white-space: nowrap; }
.st-db { width: 130px; height: 100%; border-left: 1px solid #e8e8e8; border-right: 1px solid #e8e8e8; display: flex; align-items: center; justify-content: space-between; padding: 0 4px 0 5px; color: #b5b5b5; font-size: 12px; }
.crumbs { display: flex; align-items: center; padding-left: 5px; width: 215px; font-size: 12px; }
.cr-db { width: 12px; height: 13px; color: #6c3bc4; margin-right: 4px; }
.cr-f { width: 14px; height: 12px; margin-right: 3px; }
.cr-t { width: 12px; height: 12px; margin-right: 4px; }
.cr-g { color: #777; }
.cr-s { margin: 0 6px 0 4px; color: #999; }
.st-dots { font-size: 7px; color: #666; margin-left: 4px; }

/* dialogs */
.dialog { position: absolute; background: #fff; box-shadow: 0 3px 14px rgba(0, 0, 0, .4); display: flex; flex-direction: column; }
.d-spell { left: 592px; top: 164px; width: 812px; height: 359px; border-top: 1px solid #ddd; }
.d-title { height: 28px; border-bottom: 1px solid #ececec; display: flex; align-items: center; padding-left: 6px; gap: 5px; flex: none; font-size: 12.2px; }
.dbl { width: 16px; height: 11px; }
.d-body { flex: 1; display: flex; padding: 4px 0 3px 5px; gap: 3px; min-height: 0; }
.fs { margin: 0; min-width: 0; border: 1px solid #ececec; }
.fs legend { padding: 2px 6px 0; line-height: 16px; }
.fs-src { width: 249px; padding: 0 7px; border-bottom: 0; }
.fs-src legend { margin-left: -2px; }
.fs-fix { flex: 1; padding: 0 11px; }
.fs-fix legend { margin-left: -5px; }
.lb { line-height: 14px; }
.l1 { margin-top: 7px; }
.list { height: 141px; margin-top: 3px; border: 1px solid #ececec; }
.list-sel { height: 25px; line-height: 27px; background: #e8f2fc; padding-left: 5px; }
.l2 { margin-top: 7px; }
.l3 { margin-top: 6px; }
.spin-row { display: flex; gap: 4px; margin-top: 4px; height: 26px; }
.inp { width: 212px; border: 1px solid #efefef; line-height: 26px; padding-left: 4px; }
.spin { width: 16px; background: #f4f4f4; border-radius: 3px; display: flex; flex-direction: column; align-items: center; justify-content: space-around; }
.fix { display: flex; }
.fix-l { width: 259px; }
.fl1 { margin-top: 10px; }
.fl2 { margin-top: 7px; }
.fhr { height: 1px; background: #ececec; margin-top: 4px; }
.fl3 { margin-top: 7px; }
.skip { margin: 124px 0 0 71px; width: 119px; height: 23px; background: #efefef; border-radius: 2px; color: #9a9a9a; text-align: center; line-height: 23px; }
.fix-r { flex: 1; margin-left: 4px; }
.sg-head { margin-top: 7px; padding-bottom: 1px; border-bottom: 1px solid #ececec; font-size: 12.4px; }
.sg-in { padding-left: 3px; }
.sg1 { margin-top: 10px; }
.sg2 { margin-top: 5px; }
.sg3 { margin-top: 7px; }
.sg-inp { height: 26px; margin-top: 2px; border: 1px solid #efefef; border-right: 0; line-height: 26px; padding-left: 4px; }
.sg-ch { display: flex; align-items: center; height: 16px; margin-top: 7px; font-size: 13px; }
.sg-ch span { padding-top: 2px; }
.check { width: 16px; height: 16px; border: 1px solid #999; border-radius: 3px; margin-right: 11px; background: #fff; }
.sg-hr { height: 1px; background: #ececec; margin-top: 8px; }
.d-foot { height: 31px; flex: none; border-top: 1px solid #ececec; display: flex; align-items: center; justify-content: flex-end; gap: 4px; padding-right: 2px; }
.btn { font: 600 12.6px/14px "Open Sans", sans-serif; color: #fff; border: 0; border-radius: 3px; height: 24px; width: 110px; padding: 1px 0 0; }
.b-orange { background: #ff8c00; }
.b-blue { background: #007aff; border: 2px solid #9bd000; height: 26px; }
.b-red { background: #ff3b20; }
.d-done { left: 624px; top: 293px; width: 500px; height: 128px; }
.dn-title { height: 29px; border-bottom: 1px solid #ececec; display: flex; align-items: center; padding: 0 11px 0 8px; gap: 6px; flex: none; }
.dn-title span { padding-top: 2px; }
.dn-x { margin-left: auto; color: #666; }
.dn-body { flex: 1; display: flex; align-items: center; padding: 0 8px; gap: 17px; }
.dn-ic { width: 54px; height: 54px; }
.dn-body p { margin: 0; padding-top: 2px; line-height: 18px; width: 420px; font-size: 12.4px; white-space: nowrap; }
.dn-foot { height: 31px; flex: none; border-top: 1px solid #ececec; display: flex; justify-content: flex-end; align-items: flex-start; padding: 2px 3px 0 0; }
.ok { font-size: 13px; }
.watermark { position: absolute; left: 1140px; top: 672px; font-size: 14.4px; line-height: 18px; color: rgba(60, 60, 60, .7); white-space: nowrap; }
```
